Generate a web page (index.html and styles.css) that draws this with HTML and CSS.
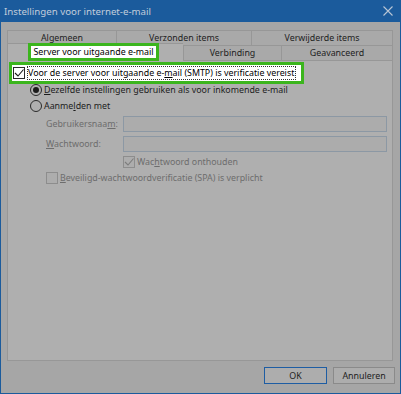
FILE: index.html
```html
<!DOCTYPE html>
<html lang="nl">
<head>
    <meta charset="UTF-8">
    <title>Instellingen voor internet-e-mail</title>
    <link rel="stylesheet" href="styles.css">
</head>
<body>
    <div class="window">
        <div class="titlebar">
            <span class="title">Instellingen voor internet-e-mail</span>
            <svg class="close" width="10" height="10" viewBox="0 0 10 10">
                <path d="M0.5 0.5 L9.5 9.5 M9.5 0.5 L0.5 9.5" stroke="#b9c6d5" stroke-width="1.1" fill="none"/>
            </svg>
        </div>

        <div class="dialog">
            <div class="tab-row row-back">
                <div class="tab">Algemeen</div>
                <div class="tab">Verzonden items</div>
                <div class="tab">Verwijderde items</div>
            </div>
            <div class="tab-row row-front">
                <div class="tab tab-active">
                    <span class="mark tab-mark">Server voor uitgaande e-mail</span>
                </div>
                <div class="tab">Verbinding</div>
                <div class="tab">Geavanceerd</div>
            </div>

            <div class="panel">
                <div class="mark check-mark-row">
                    <span class="box box-checked">
                        <svg width="10" height="10" viewBox="0 0 10 10"><path d="M1 5 L4 8 L9.5 1.5" stroke="#1a1a1a" stroke-width="1.1" fill="none"/></svg>
                    </span>
                    <span class="focus">Voor de server voor uitgaande e-<u>m</u>ail (SMTP) is verificatie vereist</span>
                </div>

                <div class="row row-radio-first">
                    <span class="radio radio-on"></span>
                    <span><u>D</u>ezelfde instellingen gebruiken als voor inkomende e-mail</span>
                </div>
                <div class="row row-radio">
                    <span class="radio"></span>
                    <span>Aanme<u>l</u>den met</span>
                </div>

                <div class="row row-field">
                    <span class="field-label">Gebruikersnaa<u>m</u>:</span>
                    <span class="input"></span>
                </div>
                <div class="row row-field">
                    <span class="field-label"><u>W</u>achtwoord:</span>
                    <span class="input"></span>
                </div>

                <div class="row row-check row-remember">
                    <span class="box box-disabled">
                        <svg width="10" height="10" viewBox="0 0 10 10"><path d="M1 5 L4 8 L9.5 1.5" stroke="#7c7c7c" stroke-width="1.1" fill="none"/></svg>
                    </span>
                    <span>Wac<u>h</u>twoord onthouden</span>
                </div>
                <div class="row row-check row-spa">
                    <span class="box box-disabled"></span>
                    <span><u>B</u>eveiligd-wachtwoordverificatie (SPA) is verplicht</span>
                </div>
            </div>

            <div class="buttons">
                <button class="btn btn-default">OK</button>
                <button class="btn">Annuleren</button>
            </div>
        </div>
    </div>
</body>
</html>
```

FILE: styles.css
```css
* {
    margin: 0;
    padding: 0;
    box-sizing: border-box;
}

body {
    font-family: "Noto Sans", "Open Sans", sans-serif;
    font-size: 8.85px;
    color: #1d1d1d;
    background-color: #a6a6a6;
}

.window {
    width: 401px;
    height: 394px;
    border: 1px solid #1b5b9c;
    border-top: 0;
    background-color: #a6a6a6;
    display: flex;
    flex-direction: column;
}

.titlebar {
    height: 22px;
    background-color: #1b5b9c;
    display: flex;
    align-items: center;
    justify-content: space-between;
    padding: 0 7px 0 3px;
    color: #c2cddb;
    font-size: 9.7px;
}

.dialog {
    flex: 1;
    display: flex;
    flex-direction: column;
    padding: 8px 5px 0 6px;
}

/* tabs */
.tab-row {
    display: grid;
    width: 386px;
}

.row-back {
    grid-template-columns: 109px 135px 142px;
    height: 15px;
}

.row-front {
    grid-template-columns: 176px 98px 112px;
    height: 16px;
}

.tab {
    display: flex;
    align-items: center;
    justify-content: center;
    border: 1px solid #979797;
    border-right: 0;
    border-bottom: 0;
    background-color: #a9a9a9;
    color: #222;
    white-space: nowrap;
}

.tab:last-child {
    border-right: 1px solid #979797;
}

.row-front .tab {
    border-bottom: 1px solid #979797;
}

.tab-active {
    background-color: #afafaf;
    justify-content: flex-start;
    align-items: stretch;
    margin-top: -2px;
    padding-left: 20px;
    border-bottom: 0 !important;
    position: relative;
    z-index: 1;
}

.mark {
    background-color: #fff;
    border: 3px solid #3bb51d;
}

.tab-mark {
    display: flex;
    align-items: center;
    justify-content: center;
    width: 131px;
    margin-top: -1px;
    height: 18px;
    color: #000;
}

/* panel */
.panel {
    width: 386px;
    height: 300px;
    border: 1px solid #979797;
    border-top: 0;
    background-color: #afafaf;
    padding: 1px 0 0 1px;
}

.check-mark-row {
    width: 295px;
    height: 22px;
    display: flex;
    align-items: center;
    padding-left: 1px;
    gap: 3px;
    color: #000;
}

.focus {
    outline: 1px dotted #333;
    outline-offset: 0;
    line-height: 12px;
    padding-right: 1px;
}

.row {
    display: flex;
    align-items: center;
    height: 12px;
    margin-top: 4px;
    white-space: nowrap;
}

.row-radio-first {
    margin-top: 0;
    padding-left: 21px;
    gap: 2px;
}

.row-radio {
    padding-left: 21px;
    gap: 2px;
}

.row-field {
    height: 16px;
    padding-left: 37px;
    color: #6d6d6d;
}

.field-label {
    width: 77px;
}

.input {
    width: 264px;
    height: 16px;
    border: 1px solid #8c98a4;
    background-color: #acacac;
}

.row-check {
    gap: 2px;
    color: #6d6d6d;
}

.row-remember {
    padding-left: 114px;
}

.row-spa {
    padding-left: 37px;
    margin-top: 4px;
}

.box {
    width: 12px;
    height: 12px;
    border: 1px solid #2a2a2a;
    display: flex;
    align-items: center;
    justify-content: center;
    flex-shrink: 0;
}

.box-checked {
    background-color: #fff;
}

.box-disabled {
    border-color: #8d8d8d;
    background-color: #adadad;
}

.radio {
    width: 12px;
    height: 12px;
    border: 1px solid #2a2a2a;
    border-radius: 50%;
    background-color: #b0b0b0;
    display: flex;
    align-items: center;
    justify-content: center;
    flex-shrink: 0;
}

.radio-on::after {
    content: "";
    width: 6px;
    height: 6px;
    border-radius: 50%;
    background-color: #1a1a1a;
}

/* buttons */
.buttons {
    display: flex;
    justify-content: flex-end;
    gap: 6px;
    margin-top: 6px;
}

.btn {
    width: 62px;
    height: 17px;
    font-family: inherit;
    font-size: 8.85px;
    color: #1d1d1d;
    background-color: #adadad;
    border: 1px solid #8a8a8a;
}

.btn-default {
    width: 63px;
    border-color: #1e5da3;
}
```
